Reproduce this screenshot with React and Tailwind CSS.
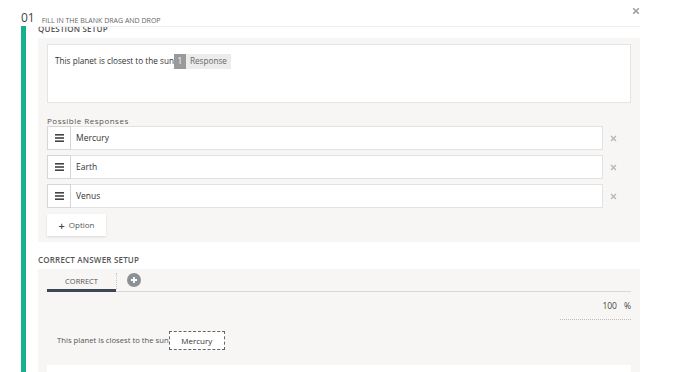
import React from "react";

const font = { fontFamily: '"Open Sans", "Noto Sans", sans-serif' };

function Handle() {
  return (
    <svg width="9" height="8" viewBox="0 0 9 8">
      <rect x="0" y="0" width="9" height="1.6" fill="#444" />
      <rect x="0" y="3.2" width="9" height="1.6" fill="#444" />
      <rect x="0" y="6.4" width="9" height="1.6" fill="#444" />
    </svg>
  );
}

function Cross({ size = 7, color = "#b8b8b8" }) {
  return (
    <svg width={size} height={size} viewBox="0 0 10 10">
      <path d="M1.5 1.5 L8.5 8.5 M8.5 1.5 L1.5 8.5" stroke={color} strokeWidth="2" />
    </svg>
  );
}

function ResponseRow({ label }) {
  return (
    <div className="flex items-center h-[24px]">
      <div className="w-[24px] h-[24px] flex items-center justify-center bg-white border border-[#d6d6d6]">
        <Handle />
      </div>
      <div className="w-[532px] h-[24px] flex items-center pl-[5px] bg-white border border-l-0 border-[#e2e2e2] text-[8.5px] text-[#333]">
        {label}
      </div>
      <div className="ml-[7px] flex items-center">
        <Cross />
      </div>
    </div>
  );
}

export default function App() {
  const responses = ["Mercury", "Earth", "Venus"];

  return (
    <div className="relative w-[700px] h-[372px] overflow-hidden bg-white" style={font}>
      <button className="absolute left-[632px] top-[7px]">
        <Cross size={8} color="#9aa0a6" />
      </button>

      <div className="pl-[21px]">
        {/* header */}
        <div className="flex items-end h-[26px] pb-[2px]">
          <span className="text-[12px] leading-none text-[#444]">01</span>
          <span className="ml-[7px] text-[7px] leading-none text-[#666] uppercase">Fill in the blank drag and drop</span>
        </div>

        <div className="flex">
          <div className="w-[5px] h-[346px] bg-[#16b08f]" />

          <div className="ml-[12px] w-[602px]">
            <div className="border-t border-[#eeeeee] h-[12px] overflow-hidden">
              <div className="mt-[-4px] text-[8px] font-semibold text-[#555] uppercase tracking-[0.2px]">Question setup</div>
            </div>

            {/* question panel */}
            <div className="bg-[#f7f6f4] px-[9px] pt-[6px] pb-[6px]">
              <div className="h-[59px] bg-white border border-[#e4e4e4] px-[7px] pt-[9px]">
                <div className="flex items-center text-[8.2px] text-[#333]">
                  <span>This planet is closest to the sun</span>
                  <span className="w-[12px] h-[15px] bg-[#9a9a9a] text-white flex items-center justify-center">1</span>
                  <span className="h-[15px] px-[4px] bg-[#ececec] text-[#666] flex items-center">Response</span>
                </div>
              </div>

              <div className="mt-[12px] text-[8px] tracking-[0.5px] text-[#555] leading-[11px]">Possible Responses</div>
              <div className="flex flex-col gap-[5px]">
                {responses.map((r) => (
                  <ResponseRow key={r} label={r} />
                ))}
              </div>

              <button className="mt-[6px] w-[59px] h-[22px] bg-white shadow-[0_1px_2px_rgba(0,0,0,0.12)] flex items-center justify-center gap-[4px] text-[8px] text-[#555]">
                <span className="text-[11px] leading-none text-[#444] font-semibold">+</span>
                Option
              </button>
            </div>

            <div className="pt-[12px] h-[27px] text-[8px] font-semibold text-[#555] uppercase tracking-[0.2px]">Correct answer setup</div>

            {/* correct answer panel */}
            <div className="bg-[#f7f6f4] px-[9px] pt-[4px] h-[120px]">
              <div className="flex items-end border-b border-[#d8d8d8]">
                <div className="w-[69px] h-[16px] flex items-start justify-center border-b-[3px] border-[#3d4852] mb-[-1px] text-[7.5px] text-[#555] uppercase">
                  Correct
                </div>
                <div className="h-[16px] border-l border-dotted border-[#c8c8c8] mb-[2px]" />
                <div className="ml-[10px] mb-[4px] w-[14px] h-[14px] rounded-full bg-[#8c9196] flex items-center justify-center">
                  <svg width="8" height="8" viewBox="0 0 8 8">
                    <path d="M4 1 V7 M1 4 H7" stroke="white" strokeWidth="1.8" />
                  </svg>
                </div>
              </div>

              <div className="flex justify-end mt-[9px]">
                <div className="w-[71px] text-right">
                  <div className="text-[8.5px] text-[#444] leading-[10px]">
                    100<span className="ml-[7px]">%</span>
                  </div>
                  <div className="mt-[8px] border-b border-dotted border-[#bdbdbd]" />
                </div>
              </div>

              <div className="mt-[11px] ml-[10px] flex items-center text-[7.7px] text-[#555]">
                <span>This planet is closest to the sun</span>
                <span className="w-[56px] h-[19px] border border-dashed border-[#666] bg-white flex items-center justify-center text-[8px] text-[#333]">
                  Mercury
                </span>
              </div>

              <div className="mt-[15px] h-[20px] bg-white" />
            </div>
          </div>
        </div>
      </div>
    </div>
  );
}
